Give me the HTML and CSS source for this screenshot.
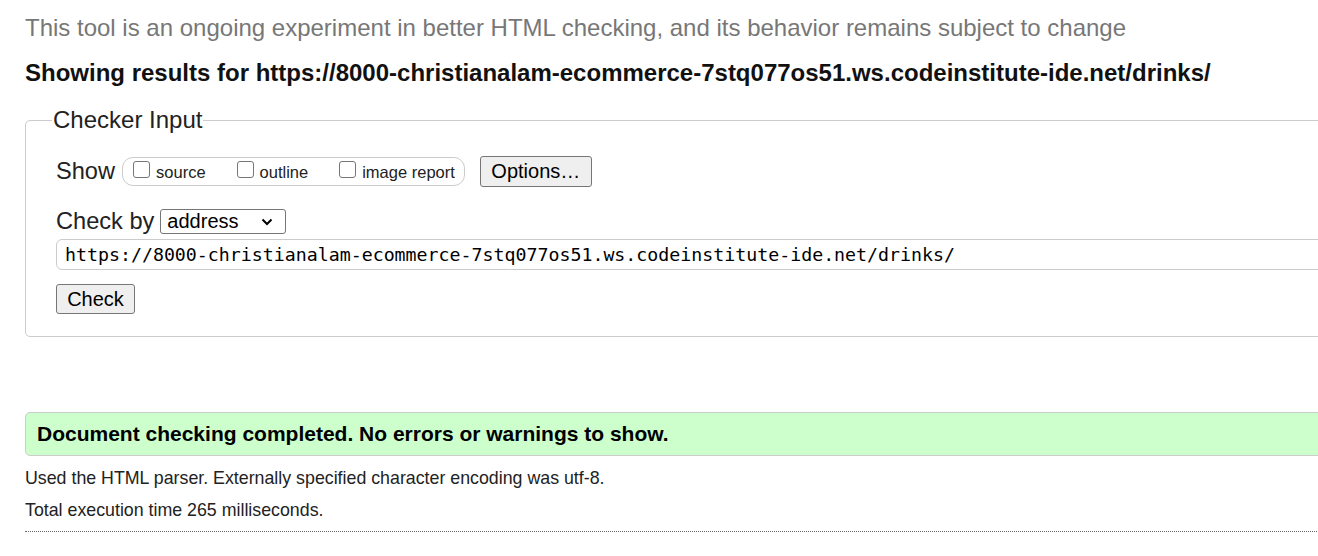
FILE: index.html
```html
<!DOCTYPE html>
<html lang="en">
<head>
<meta charset="utf-8">
<title>Nu Html Checker</title>
<link rel="stylesheet" href="styles.css">
</head>
<body>
<div class="page">
  <p class="experimental">This tool is an ongoing experiment in better HTML checking, and its behavior remains subject to change</p>
  <h2 class="showing">Showing results for https://8000-christianalam-ecommerce-7stq077os51.ws.codeinstitute-ide.net/drinks/</h2>
  <form class="checker-form">
    <fieldset class="checker">
      <legend class="legend">Checker Input</legend>
      <div class="row show-row">
        <span class="lbl">Show</span>
        <div class="opts">
          <label class="opt"><span class="cb"></span>source</label>
          <label class="opt"><span class="cb"></span>outline</label>
          <label class="opt"><span class="cb"></span>image report</label>
        </div>
        <span class="btn options">Options…</span>
      </div>
      <div class="row checkby-row">
        <span class="lbl">Check by</span>
        <span class="select">address<svg class="chev" width="12" height="8" viewBox="0 0 12 8"><path d="M1.5 1.5 L6 6 L10.5 1.5" fill="none" stroke="#000" stroke-width="2"/></svg></span>
      </div>
      <div class="url">https://8000-christianalam-ecommerce-7stq077os51.ws.codeinstitute-ide.net/drinks/</div>
      <div class="row"><span class="btn check">Check</span></div>
    </fieldset>
  </form>
  <div class="success">Document checking completed. No errors or warnings to show.</div>
  <p class="details">Used the HTML parser. Externally specified character encoding was utf-8.</p>
  <p class="details">Total execution time 265 milliseconds.</p>
  <div class="dotted"></div>
</div>
</body>
</html>
```
FILE: styles.css
```css
html, body {
  margin: 0;
  padding: 0;
  overflow: hidden;
  background: #fff;
}
.page {
  width: 1380px;
  padding: 0 0 0 25px;
  font-family: "Liberation Sans", Arial, sans-serif;
  color: #222;
}
.experimental {
  margin: 0;
  padding-top: 14px;
  font-size: 24px;
  line-height: 28px;
  color: #777;
}
.showing {
  margin: 17px 0 0 0;
  font-size: 24px;
  line-height: 28px;
  font-weight: bold;
  color: #111;
}
.checker-form {
  margin-top: 20px;
}
.checker {
  margin: 0;
  padding: 22px 30px 22px 30px;
  border: 1px solid #ccc;
  border-radius: 5px;
}
.legend {
  padding: 0 1px;
  margin-left: -4px;
  font-size: 24px;
  line-height: 26px;
  color: #222;
}
.row {
  display: flex;
  align-items: center;
}
.lbl {
  font-size: 23.6px;
  color: #222;
}
.show-row {
  height: 32px;
}
.opts {
  display: flex;
  align-items: center;
  margin-left: 7px;
  height: 27px;
  padding: 0 9px 0 10px;
  border: 1px solid #ccc;
  border-radius: 11px;
  gap: 31px;
}
.opt {
  display: flex;
  align-items: center;
  font-size: 16.5px;
  color: #222;
  padding-top: 3px;
}
.cb {
  display: inline-block;
  width: 15px;
  height: 15px;
  border: 1px solid #767676;
  border-radius: 3px;
  margin-right: 6px;
  margin-top: -7px;
  background: #fff;
}
.btn {
  display: inline-flex;
  align-items: center;
  justify-content: center;
  box-sizing: border-box;
  background: #efefef;
  border: 1px solid #767676;
  border-radius: 3px;
  color: #000;
  font-size: 20px;
}
.options {
  margin-left: 15px;
  width: 112px;
  height: 31px;
}
.checkby-row {
  margin-top: 21px;
}
.select {
  display: inline-flex;
  align-items: center;
  justify-content: space-between;
  box-sizing: border-box;
  margin-left: 6px;
  width: 126px;
  height: 25px;
  padding: 0 12px 0 6px;
  border: 1px solid #767676;
  border-radius: 3px;
  font-size: 20px;
  color: #000;
}
.url {
  margin-top: 4px;
  box-sizing: border-box;
  height: 31px;
  padding: 0 8px;
  border: 1px solid #ccc;
  border-radius: 6px;
  font-family: "DejaVu Sans Mono", "Liberation Mono", monospace;
  font-size: 18.25px;
  line-height: 29px;
  color: #000;
}
.check {
  margin-top: 14px;
  width: 79px;
  height: 30px;
}
.success {
  margin-top: 75px;
  box-sizing: border-box;
  height: 44px;
  padding: 0 11px;
  background: #cfc;
  border: 1px solid #ccc;
  border-radius: 5px;
  font-size: 21px;
  line-height: 42px;
  font-weight: bold;
  color: #000;
}
.details {
  margin: 11px 0 0 0;
  font-size: 17.8px;
  line-height: 22px;
  color: #222;
}
.details + .details {
  margin-top: 10px;
}
.dotted {
  margin-top: 10px;
  border-top: 1px dotted #666;
}
```
